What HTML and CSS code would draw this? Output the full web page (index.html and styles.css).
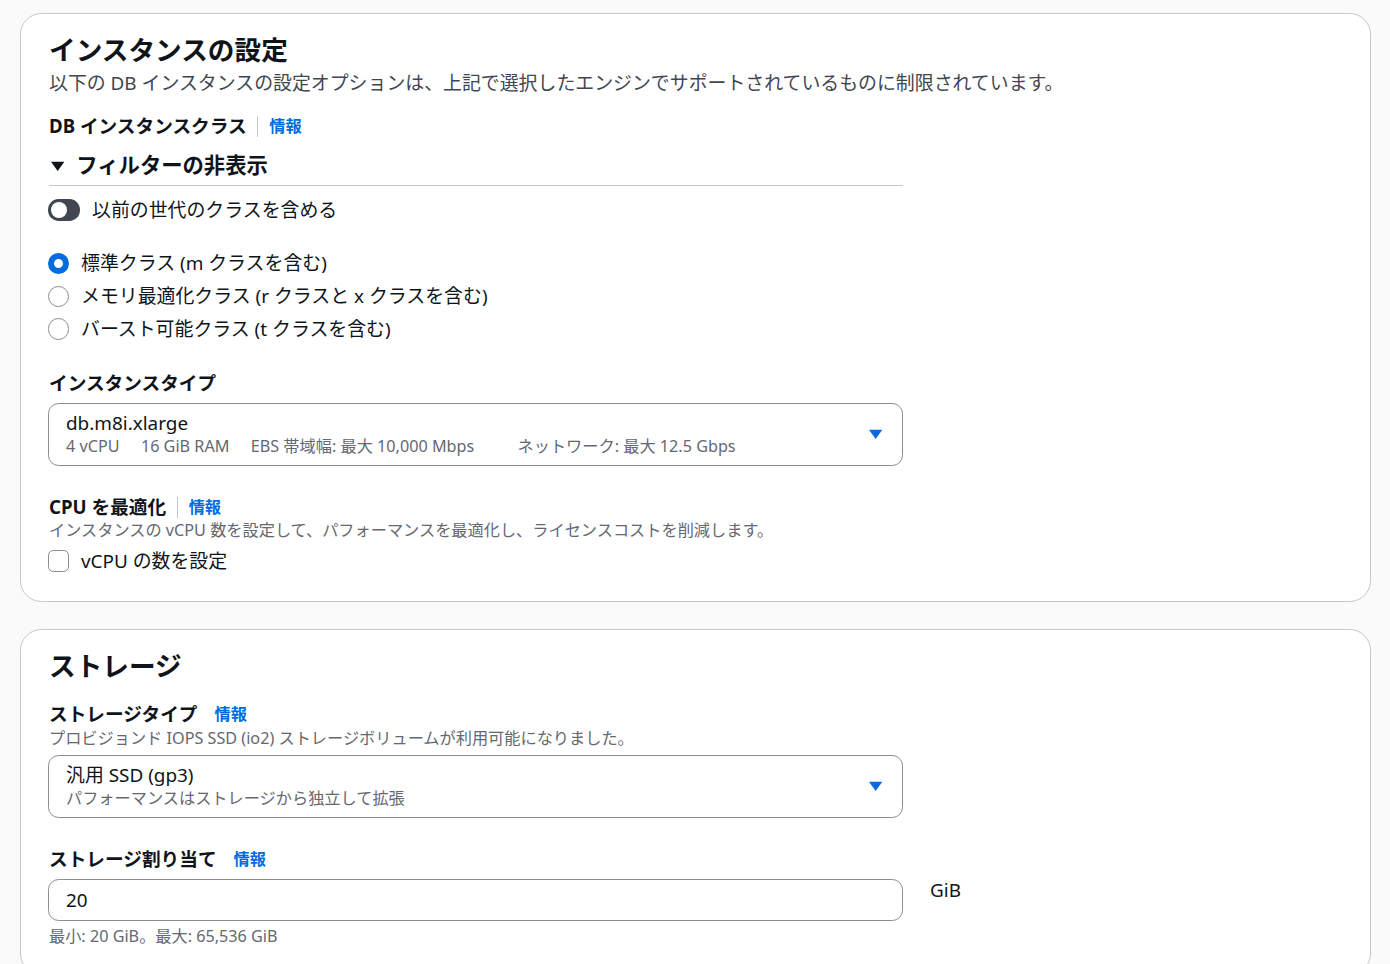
FILE: index.html
```html
<!DOCTYPE html>
<html lang="ja">
<head>
    <meta charset="UTF-8">
    <meta name="viewport" content="width=device-width, initial-scale=1.0">
    <title>インスタンスの設定</title>
    <link rel="stylesheet" href="styles.css">
</head>
<body>
    <div class="page">
        <!-- インスタンスの設定 -->
        <section class="card">
            <h2 class="card-title">インスタンスの設定</h2>
            <p class="card-desc">以下の DB インスタンスの設定オプションは、上記で選択したエンジンでサポートされているものに制限されています。</p>

            <div class="field field-first">
                <div class="label-row">
                    <span class="label">DB インスタンスクラス</span>
                    <span class="sep"></span>
                    <a class="info" href="#">情報</a>
                </div>

                <div class="expander">
                    <div class="expander-head">
                        <svg class="expander-icon" viewBox="0 0 16 16"><path d="M3 5h10l-5 7z"/></svg>
                        <span>フィルターの非表示</span>
                    </div>
                    <div class="toggle-row">
                        <span class="toggle"><span class="knob"></span></span>
                        <span>以前の世代のクラスを含める</span>
                    </div>
                </div>

                <div class="radio-group">
                    <div class="radio-row"><span class="radio checked"></span><span>標準クラス (m クラスを含む)</span></div>
                    <div class="radio-row"><span class="radio"></span><span>メモリ最適化クラス (r クラスと x クラスを含む)</span></div>
                    <div class="radio-row"><span class="radio"></span><span>バースト可能クラス (t クラスを含む)</span></div>
                </div>
            </div>

            <div class="field">
                <div class="label-row">
                    <span class="label">インスタンスタイプ</span>
                </div>
                <div class="select">
                    <div class="select-text">
                        <div class="select-value">db.m8i.xlarge</div>
                        <div class="select-tags">
                            <span>4 vCPU</span>
                            <span>16 GiB RAM</span>
                            <span>EBS 帯域幅: 最大 10,000 Mbps</span>
                            <span class="tag-wide">ネットワーク: 最大 12.5 Gbps</span>
                        </div>
                    </div>
                    <svg class="caret" viewBox="0 0 16 16"><path d="M3 5h10l-5 7z"/></svg>
                </div>
            </div>

            <div class="field">
                <div class="label-row">
                    <span class="label">CPU を最適化</span>
                    <span class="sep"></span>
                    <a class="info" href="#">情報</a>
                </div>
                <p class="field-desc">インスタンスの vCPU 数を設定して、パフォーマンスを最適化し、ライセンスコストを削減します。</p>
                <div class="check-row">
                    <span class="checkbox"></span>
                    <span>vCPU の数を設定</span>
                </div>
            </div>
        </section>

        <!-- ストレージ -->
        <section class="card">
            <h2 class="card-title">ストレージ</h2>

            <div class="field field-top">
                <div class="label-row">
                    <span class="label">ストレージタイプ</span>
                    <a class="info info-gap" href="#">情報</a>
                </div>
                <p class="field-desc">プロビジョンド IOPS SSD (io2) ストレージボリュームが利用可能になりました。</p>
                <div class="select select-tight">
                    <div class="select-text">
                        <div class="select-value">汎用 SSD (gp3)</div>
                        <div class="select-tags">
                            <span>パフォーマンスはストレージから独立して拡張</span>
                        </div>
                    </div>
                    <svg class="caret" viewBox="0 0 16 16"><path d="M3 5h10l-5 7z"/></svg>
                </div>
            </div>

            <div class="field">
                <div class="label-row">
                    <span class="label">ストレージ割り当て</span>
                    <a class="info info-gap" href="#">情報</a>
                </div>
                <div class="input-row">
                    <div class="input">20</div>
                    <span class="unit">GiB</span>
                </div>
                <p class="hint">最小: 20 GiB。最大: 65,536 GiB</p>
            </div>
        </section>
    </div>
</body>
</html>
```

FILE: styles.css
```css
/* page base */
body {
    margin: 0;
    background: #fafafa;
    color: #0f141a;
    font-family: "Noto Sans", "Noto Sans CJK JP", sans-serif;
    font-size: 18.9px;
    line-height: 26.67px;
}

.page {
    padding: 13px 19px 0 20px;
}

p {
    margin: 0;
}

/* container card */
.card {
    background: #ffffff;
    border: 1px solid #c6c6cd;
    border-radius: 21.33px;
    padding: 19.8px 27px 27px 27px;
}

.card + .card {
    margin-top: 27px;
}

.card-title {
    margin: 0 0 0 1px;
    font-size: 26.67px;
    line-height: 32px;
    font-weight: 700;
}

.card-desc {
    margin: 4px 0 0 1px;
    color: #424650;
}

/* form fields */
.field {
    max-width: 855px;
    margin-top: 27.67px;
}

.field-first {
    margin-top: 17px;
}

.field-top {
    margin-top: 18.67px;
}

.label-row {
    display: flex;
    align-items: center;
    padding-left: 1px;
}

.label {
    font-size: 18.67px;
    font-weight: 700;
}

.sep {
    width: 1px;
    height: 21px;
    background: #c6c6cd;
    margin: 0 11px 0 10.5px;
}

.info {
    color: #006ce0;
    font-size: 16.2px;
    font-weight: 700;
    text-decoration: none;
}

.info-gap {
    margin-left: 17px;
}

.field-desc,
.hint {
    font-size: 16.2px;
    line-height: 21.33px;
    color: #656871;
    padding-left: 1px;
}

.hint {
    margin-top: 5.33px;
}

/* expandable filter section */
.expander-head {
    display: flex;
    align-items: center;
    margin: 12px 0 0 1px;
    padding-bottom: 6.5px;
    border-bottom: 1px solid #c6c6cd;
    font-size: 21.33px;
    line-height: 26.67px;
    font-weight: 700;
}

.expander-icon {
    width: 21.33px;
    height: 21.33px;
    margin-left: -2.5px;
    margin-right: 8.5px;
    fill: #0f141a;
}

.toggle-row,
.radio-row,
.check-row {
    display: flex;
    align-items: center;
}

.toggle-row {
    margin-top: 10.5px;
}

.toggle {
    position: relative;
    width: 32px;
    height: 21.33px;
    border-radius: 10.67px;
    background: #424650;
    margin-right: 12px;
}

.knob {
    position: absolute;
    top: 2.67px;
    left: 2.67px;
    width: 16px;
    height: 16px;
    border-radius: 50%;
    background: #ffffff;
}

/* radio buttons */
.radio-group {
    margin-top: 27px;
    display: flex;
    flex-direction: column;
    gap: 5.9px;
}

.radio {
    box-sizing: border-box;
    width: 21.33px;
    height: 21.33px;
    border-radius: 50%;
    border: 1.5px solid #8c8c94;
    background: #ffffff;
    margin-right: 11.67px;
}

.radio.checked {
    border: 6.67px solid #006ce0;
}

/* checkbox */
.check-row {
    margin-top: 6px;
}

.checkbox {
    box-sizing: border-box;
    width: 21.33px;
    height: 21.33px;
    border: 1.5px solid #8c8c94;
    border-radius: 5.33px;
    margin-right: 11.67px;
}

/* select boxes */
.select {
    display: flex;
    align-items: center;
    margin-top: 6.5px;
    border: 1px solid #8c8c94;
    border-radius: 10.67px;
    padding: 5.67px 16px 7.33px 17px;
}

.select-tight {
    margin-top: 6px;
}

.select-text {
    flex: 1;
}

.select-tags {
    display: flex;
    gap: 21.33px;
    font-size: 16.2px;
    line-height: 21.33px;
    color: #656871;
}

.tag-wide {
    margin-left: 22px;
}

.caret {
    width: 21.33px;
    height: 21.33px;
    fill: #006ce0;
}

/* number input */
.input-row {
    display: flex;
    align-items: flex-start;
    margin-top: 6.5px;
}

.input {
    box-sizing: border-box;
    flex: 0 0 855px;
    height: 42px;
    border: 1px solid #8c8c94;
    border-radius: 10.67px;
    padding: 7px 17px;
}

.unit {
    margin-left: 27px;
    margin-top: -1.5px;
}
```
